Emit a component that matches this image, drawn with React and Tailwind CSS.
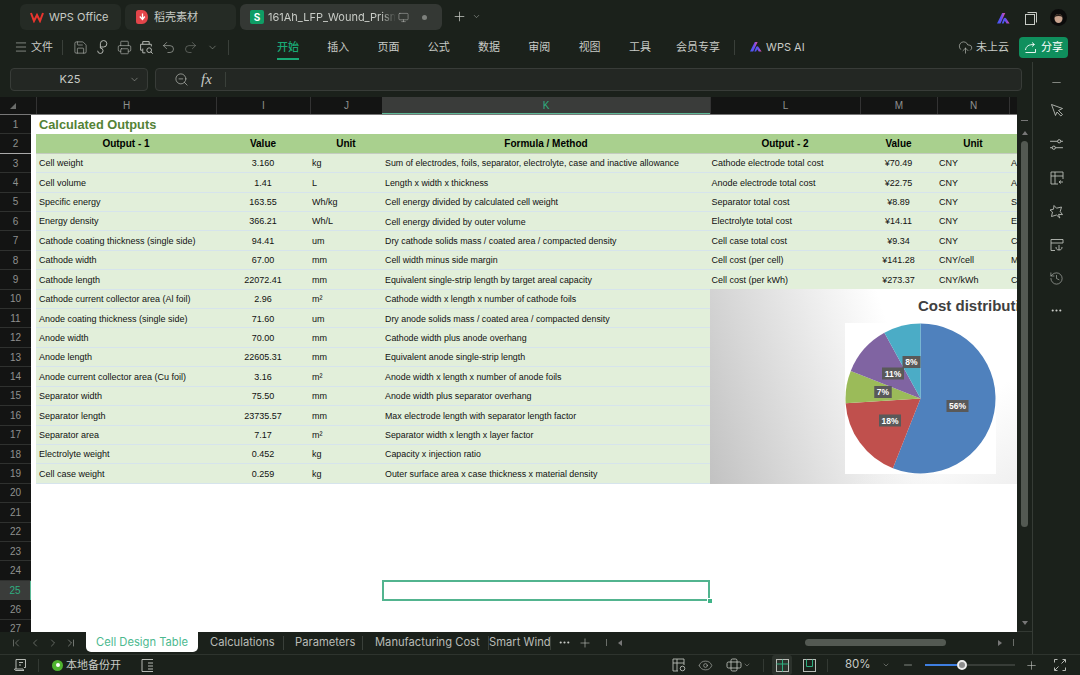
import {
  ChevronDown, ChevronFirst, ChevronLast, ChevronLeft, ChevronRight, CloudUpload, Ellipsis, Eye,
  History, Menu, Minus, Monitor, Plus, Printer, Redo2, Save, Undo2, ZoomOut,
} from "lucide-react"

const uiFont = "[font-family:'Inter','Noto_Sans_CJK_SC',sans-serif]"

const rows = [
  ["Cell weight", "3.160", "kg", "Sum of electrodes, foils, separator, electrolyte, case and inactive allowance", "Cathode electrode total cost", "¥70.49", "CNY", "A"],
  ["Cell volume", "1.41", "L", "Length x width x thickness", "Anode electrode total cost", "¥22.75", "CNY", "A"],
  ["Specific energy", "163.55", "Wh/kg", "Cell energy divided by calculated cell weight", "Separator total cost", "¥8.89", "CNY", "S"],
  ["Energy density", "366.21", "Wh/L", "Cell energy divided by outer volume", "Electrolyte total cost", "¥14.11", "CNY", "E"],
  ["Cathode coating thickness (single side)", "94.41", "um", "Dry cathode solids mass / coated area / compacted density", "Cell case total cost", "¥9.34", "CNY", "C"],
  ["Cathode width", "67.00", "mm", "Cell width minus side margin", "Cell cost (per cell)", "¥141.28", "CNY/cell", "M"],
  ["Cathode length", "22072.41", "mm", "Equivalent single-strip length by target areal capacity", "Cell cost (per kWh)", "¥273.37", "CNY/kWh", "C"],
  ["Cathode current collector area (Al foil)", "2.96", "m²", "Cathode width x length x number of cathode foils"],
  ["Anode coating thickness (single side)", "71.60", "um", "Dry anode solids mass / coated area / compacted density"],
  ["Anode width", "70.00", "mm", "Cathode width plus anode overhang"],
  ["Anode length", "22605.31", "mm", "Equivalent anode single-strip length"],
  ["Anode current collector area (Cu foil)", "3.16", "m²", "Anode width x length x number of anode foils"],
  ["Separator width", "75.50", "mm", "Anode width plus separator overhang"],
  ["Separator length", "23735.57", "mm", "Max electrode length with separator length factor"],
  ["Separator area", "7.17", "m²", "Separator width x length x layer factor"],
  ["Electrolyte weight", "0.452", "kg", "Capacity x injection ratio"],
  ["Cell case weight", "0.259", "kg", "Outer surface area x case thickness x material density"],
]

const columns = [
  ["H", "w-[180px]"], ["I", "w-[94px]"], ["J", "w-[72px]"], ["K", "w-[328px]"],
  ["L", "w-[150px]"], ["M", "w-[77px]"], ["N", "w-[72px]"],
]

const slices = [
  { pct: 56, color: "#4f81bd" },
  { pct: 18, color: "#c0504d" },
  { pct: 7, color: "#9bbb59" },
  { pct: 11, color: "#8064a2" },
  { pct: 8, color: "#4bacc6" },
]

const labels = [
  { text: "56%", x: 112.5, y: 83, w: 22 },
  { text: "18%", x: 45, y: 97.5, w: 22 },
  { text: "7%", x: 38, y: 69, w: 17.5 },
  { text: "11%", x: 48, y: 50.5, w: 22 },
  { text: "8%", x: 66.5, y: 39, w: 18 },
]

function slicePath(start, pct) {
  const a0 = (start / 100) * 2 * Math.PI
  const a1 = ((start + pct) / 100) * 2 * Math.PI
  const x0 = 75.5 + 75 * Math.sin(a0)
  const y0 = 75.5 - 75 * Math.cos(a0)
  const x1 = 75.5 + 75 * Math.sin(a1)
  const y1 = 75.5 - 75 * Math.cos(a1)
  return `M75.5 75.5L${x0} ${y0}A75 75 0 ${pct > 50 ? 1 : 0} 1 ${x1} ${y1}Z`
}

function PieChart() {
  let start = 0
  return (
    <svg width="151" height="151" viewBox="0 0 151 151" className="block bg-white">
      {slices.map((s) => {
        const d = slicePath(start, s.pct)
        start += s.pct
        return <path key={s.color} d={d} fill={s.color} />
      })}
      {labels.map((l) => (
        <g key={l.text}>
          <rect x={l.x - l.w / 2} y={l.y - 6} width={l.w} height="12" fill="#595959" />
          <text x={l.x} y={l.y + 3} textAnchor="middle" fontSize="8.5" fontWeight="700" fill="#fff" fontFamily="Liberation Sans">
            {l.text}
          </text>
        </g>
      ))}
    </svg>
  )
}

function AiLogo({ size = 12 }) {
  return (
    <svg width={size} height={size * 0.8} viewBox="0 0 15 12">
      <defs>
        <linearGradient id="ailogo" x1="0" x2="1" y1="0" y2="0">
          <stop offset="0" stopColor="#3d5cf5" />
          <stop offset="0.55" stopColor="#6a4cf0" />
          <stop offset="1" stopColor="#f0509a" />
        </linearGradient>
      </defs>
      <path d="M0 12L6 0h3.5L4 12z" fill="url(#ailogo)" />
      <path d="M7.5 6.5C8.5 5 10 5 10.8 6.5L14.5 12h-3.6L9 9 7.6 12H5.5z" fill="url(#ailogo)" />
    </svg>
  )
}

function Tabs() {
  return (
    <div className="h-[32px] flex items-start pt-[4px] pl-[20px] gap-[4px] text-[11px] text-[#c8cbc6]">
      <div className="w-[101px] h-[26px] rounded-[6px] bg-[#252b25] flex items-center pl-[10px] gap-[5px]">
        <svg width="14" height="11" viewBox="0 0 14 11" fill="none" stroke="#e8352e" strokeWidth="2">
          <path d="M1 1l3 8 3-6 3 6 3-8" />
        </svg>
        <span>WPS Office</span>
      </div>
      <div className="w-[111px] h-[26px] rounded-[6px] bg-[#252b25] flex items-center pl-[11px] gap-[6px]">
        <svg width="12" height="14" viewBox="0 0 12 14">
          <path d="M0 2.5A2.5 2.5 0 0 1 2.5 0H6c3.5 0 6 3 6 7s-2.5 7-6 7H2.5A2.5 2.5 0 0 1 0 11.5z" fill="#e2454a" />
          <path d="M6.5 3.5v5.5M3.8 6.5L6.5 9.5 8.8 6.5" fill="none" stroke="#fff" strokeWidth="1.3" />
        </svg>
        <span>稻壳素材</span>
      </div>
      <div className="w-[202px] h-[26px] rounded-[6px] bg-[#343834] flex items-center pl-[10px]">
        <div className="w-[14px] h-[14px] rounded-[2px] bg-[#0f9d65] text-white text-[10px] font-bold flex items-center justify-center">S</div>
        <div className="ml-[4px] w-[128px] overflow-hidden whitespace-nowrap [mask-image:linear-gradient(to_right,black_88%,transparent)]">161Ah_LFP_Wound_Prismatic</div>
        <Monitor size={11} strokeWidth={1} className="ml-[2px]" />
        <div className="ml-[13px] w-[5px] h-[5px] rounded-full bg-[#7d807c]" />
      </div>
      <Plus size={15} strokeWidth={1.2} className="ml-[6px] mt-[5px]" />
      <ChevronDown size={9} strokeWidth={1.2} className="ml-[1px] mt-[8px]" />
      <div className="ml-auto mr-[13px] mt-[7px] flex items-center">
        <AiLogo size={13} />
        <svg width="12" height="13" viewBox="0 0 12 13" fill="none" stroke="currentColor" strokeWidth="1" className="ml-[15px]">
          <rect x=".5" y="2.5" width="9" height="10" />
          <path d="M2.5 .5h9v10" />
        </svg>
        <svg width="17" height="17" viewBox="0 0 17 17" className="ml-[13px] -mt-[2px]">
          <circle cx="8.5" cy="8.5" r="8.5" fill="#0b0b0b" />
          <ellipse cx="8.5" cy="9.5" rx="4" ry="4.5" fill="#c9a48f" />
          <path d="M4.5 8C4.5 4 12.5 4 12.5 8 10 6.5 7 6.5 4.5 8z" fill="#2a211c" />
        </svg>
      </div>
    </div>
  )
}

function Toolbar() {
  const iconClass = "w-[22px] flex justify-center"
  const nav = ["插入", "页面", "公式", "数据", "审阅", "视图", "工具"]
  return (
    <div className="h-[30px] flex items-center pl-[14px] text-[11px] text-[#c8cbc6] whitespace-nowrap">
      <Menu size={14} strokeWidth={1} />
      <span className="ml-[3px] w-[22px]">文件</span>
      <div className="ml-[9px] w-px h-[15px] bg-[#3a403a]" />
      <div className="ml-[6px] flex items-center text-[#b9bcb7]">
        <span className={iconClass}><Save size={15} strokeWidth={1} /></span>
        <span className={iconClass}>
          <svg width="14" height="14" viewBox="0 0 13 13" fill="none" stroke="currentColor" strokeWidth="0.9">
            <path d="M5 7.5V3.5a3 3 0 1 1 3 3H5M5 7.5a2.5 2.5 0 1 1-2.5 2.5" />
          </svg>
        </span>
        <span className={iconClass}><Printer size={15} strokeWidth={1} /></span>
        <span className={iconClass}>
          <svg width="15" height="15" viewBox="0 0 14 14" fill="none" stroke="currentColor" strokeWidth="0.9">
            <path d="M3.5 4V1.5h6V4M3 9.5H1.5V4h10v2M3.5 8v4H6" />
            <circle cx="9.5" cy="9.5" r="2.2" />
            <path d="M11 11l1.8 1.8" />
          </svg>
        </span>
        <span className={iconClass}><Undo2 size={15} strokeWidth={1} /></span>
        <span className={iconClass}><Redo2 size={15} strokeWidth={1} className="text-[#7b7f7a]" /></span>
        <span className={iconClass}><ChevronDown size={11} strokeWidth={1} /></span>
      </div>
      <div className="ml-[5px] w-px h-[15px] bg-[#3a403a]" />
      <div className="ml-[34px] w-[50px] h-full flex items-center justify-center relative text-[#19a874] font-medium">
        开始
        <div className="absolute bottom-[2px] left-[14px] w-[22px] h-[2px] bg-[#19a874]" />
      </div>
      {nav.map((t) => (
        <div key={t} className="w-[50.3px] text-center">{t}</div>
      ))}
      <div className="w-[66px] text-center">会员专享</div>
      <div className="ml-[3px] w-px h-[15px] bg-[#3a403a]" />
      <div className="ml-[15px]"><AiLogo size={12} /></div>
      <span className="ml-[4px]">WPS AI</span>
      <div className="ml-auto flex items-center pr-[12px]">
        <CloudUpload size={15} strokeWidth={1} />
        <span className="ml-[3px]">未上云</span>
        <div className="ml-[10px] w-[49px] h-[21px] rounded-[4px] bg-[#0f8f5d] text-white flex items-center justify-center gap-[4px]">
          <svg width="13" height="13" viewBox="0 0 13 13" fill="none" stroke="currentColor" strokeWidth="0.9">
            <path d="M11.5 8v3.5h-10M1.5 9C2 5 5 3.5 10 3.5M8 1.5l2.5 2-2.5 2" />
          </svg>
          <span>分享</span>
        </div>
      </div>
    </div>
  )
}

function FormulaBar() {
  return (
    <div className="h-[35px] pt-[6px] pl-[10px] flex text-[#c8cbc6]">
      <div className="w-[138px] h-[23px] rounded-[4px] bg-[#232723] border border-[#383c38] flex items-center text-[11px]">
        <span className="w-[118px] text-center">K25</span>
        <ChevronDown size={11} strokeWidth={1} />
      </div>
      <div className="ml-[7px] w-[867px] h-[23px] rounded-[4px] bg-[#232723] border border-[#383c38] flex items-center">
        <ZoomOut size={15} strokeWidth={1} className="ml-[18px]" />
        <span className="ml-[12px] w-[14px] text-[15px] italic [font-family:'Liberation_Serif',serif]">fx</span>
        <div className="ml-[10px] w-px h-[15px] bg-[#3a403a]" />
      </div>
    </div>
  )
}

function ColumnHeaders() {
  return (
    <div className="h-[17px] flex bg-[#131413] text-[10px] text-[#8f918f] [font-family:'Liberation_Sans',sans-serif]">
      <div className="w-[36px] flex items-center justify-center">
        <div className="w-0 h-0 ml-[-10px] border-l-[6px] border-l-transparent border-b-[6px] border-b-[#6a6c6a]" />
      </div>
      {columns.map(([name, width]) => (
        name === "K" ? (
          <div key={name} className={`${width} bg-[#3a3c3a] text-[#2fae80] text-center leading-[17px] border-b-[1.5px] border-[#5cb896]`}>{name}</div>
        ) : (
          <div key={name} className={`${width} border-l border-[#333] text-center leading-[17px]`}>{name}</div>
        )
      ))}
      <div className="flex-1 border-l border-[#333]" />
    </div>
  )
}

function RowHeaders() {
  const nums = Array.from({ length: 27 }, (_, i) => i + 1)
  return (
    <div className="w-[31px] shrink-0 bg-[#131413] text-[10px] text-[#8f918f] [font-family:'Liberation_Sans',sans-serif]">
      {nums.map((n) => (
        n === 25 ? (
          <div key={n} className="h-[19.42px] bg-[#3a3c3a] text-[#2fae80] flex items-center justify-center border-r-[1.5px] border-[#5cb896]">{n}</div>
        ) : (
          <div key={n} className={`h-[19.42px] flex items-center justify-center border-b ${n === 2 ? "border-[#aaa]" : "border-[#2f312f]"}`}>{n}</div>
        )
      ))}
    </div>
  )
}

const rowGrid = "grid grid-cols-[180px_94px_72px_328px_150px_77px_72px_8px] h-[19.42px] items-center"

function SheetBody() {
  return (
    <div className="relative flex-1 overflow-hidden flex bg-white border-t border-[#777]">
      <RowHeaders />
      <div className="flex-1 pl-[5px] text-[9px] text-[#111] [font-family:'Liberation_Sans',sans-serif]">
        <div className="h-[19.42px] pl-[3px] flex items-center text-[12.8px] font-bold text-[#548235]">Calculated Outputs</div>
        <div className={`${rowGrid} bg-[#a9d08e] text-[10px] font-bold text-black text-center border-b border-[#c4ccc0]`}>
          <div>Output - 1</div><div>Value</div><div>Unit</div><div>Formula / Method</div>
          <div>Output - 2</div><div>Value</div><div>Unit</div><div />
        </div>
        {rows.map((r) => (
          <div key={r[0]} className={`${rowGrid} pt-[2px] bg-[#e2efda] border-b border-[#d6e4ec] whitespace-nowrap`}>
            <div className="pl-[3px]">{r[0]}</div>
            <div className="text-center">{r[1]}</div>
            <div className="pl-[2px]">{r[2]}</div>
            <div className="pl-[3px] text-[8.85px]">{r[3]}</div>
            <div className="pl-[1.5px]">{r[4]}</div>
            <div className="text-center">{r[5]}</div>
            <div className="pl-[2px]">{r[6]}</div>
            <div className="pl-[2px] overflow-hidden">{r[7]}</div>
          </div>
        ))}
      </div>

      {/* chart floats over cells L10:O19 */}
      <div className="absolute left-[710px] top-[174px] w-[307px] h-[195px] overflow-hidden bg-[linear-gradient(to_top_left,#f0f0f0,transparent_28%),linear-gradient(72deg,#c2c2c2_0%,#ffffff_62%)] [font-family:'Liberation_Sans',sans-serif]">
        <div className="absolute left-[208px] top-[6px] text-[15px] font-bold text-[#404040] whitespace-nowrap">Cost distribution</div>
        <div className="absolute left-[135px] top-[34px]"><PieChart /></div>
      </div>

      {/* selected cell K25 */}
      <div className="absolute left-[382px] top-[465px] w-[328px] h-[21px] border-2 border-[#52b48f]" />
      <div className="absolute left-[707px] top-[483px] w-[6px] h-[6px] bg-[#3fb488] border border-white" />
    </div>
  )
}

function ScrollGutter() {
  return (
    <div className="w-[15px] bg-[#1b211b] border-b border-[#333933] flex flex-col items-center">
      <div className="mt-[23px] w-[7px] h-px bg-[#777]" />
      <div className="mt-[10px] w-0 h-0 border-x-[3px] border-x-transparent border-b-[4px] border-b-[#777]" />
      <div className="mt-[6px] w-[7px] h-[386px] rounded-full bg-[#535952]" />
      <div className="mt-[94px] w-0 h-0 border-x-[3px] border-x-transparent border-t-[4px] border-t-[#777]" />
    </div>
  )
}

function SheetTabs() {
  return (
    <div className={`h-[22px] flex items-start pl-[10px] text-[11.2px] text-[#b9bcb7] ${uiFont}`}>
      <div className="h-[21px] flex items-center text-[#a9ada7]">
        <ChevronFirst size={12} strokeWidth={1} />
        <ChevronLeft size={12} strokeWidth={1} className="ml-[7px]" />
        <ChevronRight size={12} strokeWidth={1} className="ml-[6px]" />
        <ChevronLast size={12} strokeWidth={1} className="ml-[6px] text-[#c8cbc6]" />
      </div>
      <div className="ml-[9px] w-[112px] h-[20px] rounded-b-[5px] bg-white text-[#4cb98f] flex items-center justify-center">Cell Design Table</div>
      <div className="h-[21px] flex items-center whitespace-nowrap">
        <span className="ml-[12px] w-[62px]">Calculations</span>
        <div className="ml-[11px] w-px h-[14px] bg-[#3a403a]" />
        <span className="ml-[11px] w-[57px]">Parameters</span>
        <div className="ml-[10px] w-px h-[14px] bg-[#3a403a]" />
        <span className="ml-[12px] w-[102px]">Manufacturing Cost</span>
        <div className="ml-[11px] w-px h-[14px] bg-[#3a403a]" />
        <span className="w-[61px] overflow-hidden">Smart Windl</span>
        <div className="w-px h-[14px] bg-[#3a403a]" />
        <Ellipsis size={13} className="ml-[7px] text-[#c8cbc6]" />
        <Plus size={14} strokeWidth={1} className="ml-[7px] text-[#c8cbc6]" />
        <div className="ml-[14px] w-px h-[7px] bg-[#6a6e69]" />
        <div className="ml-[11px] w-0 h-0 border-y-[3px] border-y-transparent border-r-[4px] border-r-[#777]" />
        <div className="ml-[183px] w-[141px] h-[7px] rounded-full bg-[#535952]" />
        <div className="ml-[52px] w-0 h-0 border-y-[3px] border-y-transparent border-l-[4px] border-l-[#777]" />
        <div className="ml-[11px] w-px h-[7px] bg-[#6a6e69]" />
      </div>
    </div>
  )
}

function SideRail() {
  return (
    <div className="w-[48px] border-l border-[#363c36] flex flex-col items-center text-[#b9bcb7]">
      <Minus size={13} strokeWidth={1.2} className="mt-[14px]" />
      <svg width="14" height="14" viewBox="0 0 14 14" fill="none" stroke="currentColor" strokeWidth="0.9" className="mt-[14px]">
        <path d="M1.5 1.5L12.5 5.5 8.5 7.5 12.5 11.5 10.8 13 7 9 5.5 12.5z" />
      </svg>
      <svg width="15" height="15" viewBox="0 0 14 14" fill="none" stroke="currentColor" strokeWidth="0.9" className="mt-[20px]">
        <path d="M1 4h7M11 4h2M1 10h2M6 10h7" />
        <circle cx="9.5" cy="4" r="1.5" />
        <circle cx="4.5" cy="10" r="1.5" />
      </svg>
      <svg width="14" height="14" viewBox="0 0 14 14" fill="none" stroke="currentColor" strokeWidth="0.9" className="mt-[19px]">
        <path d="M8 13H1V1h12v7M1 5h12M5 1v12M9 11h4M11 9.5L9 11l2 1.5" />
      </svg>
      <svg width="15" height="15" viewBox="0 0 15 15" fill="none" stroke="currentColor" strokeWidth="0.9" className="mt-[19px]">
        <path d="M5 1.5l2.5 2.7 5-1.2-1.3 4.6 2.3 3-4-.2L10.8 14 7.5 11l-5 1.5 1-4.5L1 6l3.5-.8z" />
      </svg>
      <svg width="14" height="14" viewBox="0 0 14 14" fill="none" stroke="currentColor" strokeWidth="0.9" className="mt-[19px]">
        <path d="M13 5V1.5H1v11h4M1 5h12M9 7v5M9 12c-2 0-3-1-3-3M9 12c2 0 3-1 3-3" />
      </svg>
      <History size={15} strokeWidth={1} className="mt-[19px]" />
      <Ellipsis size={13} className="mt-[18px] text-[#c8cbc6]" />
    </div>
  )
}

function StatusBar() {
  const sep = "w-px h-[13px] bg-[#333933]"
  return (
    <div className={`h-[21px] border-t border-[#2e342e] flex items-center pl-[13px] pr-[14px] text-[11px] text-[#c8cbc6] ${uiFont}`}>
      <svg width="14" height="14" viewBox="0 0 14 14" fill="none" stroke="currentColor" strokeWidth="0.9">
        <path d="M3 1.5h9.5v8H11M3 1.5V11H1.5c0 1 .8 1.5 1.5 1.5h8c-.6-.4-1-1-1-1.5H3M6 4.5h4M6 7h2" />
      </svg>
      <div className={`ml-[11px] ${sep}`} />
      <div className="ml-[13px] w-[11px] h-[11px] rounded-full bg-[#4fb32f] flex items-center justify-center">
        <div className="w-[4px] h-[4px] rounded-full bg-white" />
      </div>
      <span className="ml-[3px]">本地备份开</span>
      <svg width="13" height="13" viewBox="0 0 13 13" fill="none" stroke="currentColor" strokeWidth="0.9" className="ml-[20px]">
        <path d="M12 .5H1v12h11M7 4h5M7 7h5M7 10h5" />
      </svg>
      <div className="ml-auto flex items-center">
        <svg width="16" height="14" viewBox="0 0 16 14" fill="none" stroke="currentColor" strokeWidth="0.9" className="text-[#b9bcb7]">
          <path d="M7 13H2V1h11v6M2 5h11M6 1v12" />
          <circle cx="11.5" cy="10.5" r="2.3" />
        </svg>
        <Eye size={15} strokeWidth={1} className="ml-[11px] text-[#b9bcb7]" />
        <svg width="16" height="14" viewBox="0 0 16 14" fill="none" stroke="currentColor" strokeWidth="0.9" className="ml-[13px] text-[#b9bcb7]">
          <rect x="5" y="1" width="6" height="12" rx="1.5" />
          <rect x="1" y="4" width="14" height="6" rx="1.5" />
        </svg>
        <ChevronDown size={8} strokeWidth={1.2} className="ml-[1px]" />
        <div className={`ml-[12px] ${sep}`} />
        <div className="ml-[8px] w-[20px] h-[20px] rounded-[3px] bg-[#2c322c] flex items-center justify-center">
          <svg width="13" height="13" viewBox="0 0 13 13" fill="none" strokeWidth="1">
            <rect x=".5" y=".5" width="12" height="12" stroke="#b9bcb7" />
            <path d="M.5 5h12M6.5 .5v12" stroke="#2fae80" />
          </svg>
        </div>
        <svg width="16" height="13" viewBox="0 0 16 13" fill="none" strokeWidth="1" className="ml-[9px]">
          <rect x="2.5" y=".5" width="12" height="12" stroke="#b9bcb7" />
          <path d="M5.5 .5v7h6v-7" stroke="#2fae80" />
        </svg>
        <div className={`ml-[10px] ${sep}`} />
        <span className="ml-[17px] w-[24px] text-[11.5px]">80%</span>
        <ChevronDown size={8} strokeWidth={1.2} className="ml-[13px]" />
        <Minus size={12} strokeWidth={1.2} className="ml-[12px]" />
        <div className="ml-[11px] w-[90px] h-[11px] flex items-center">
          <div className="w-[32px] h-[2px] bg-[#3f7fe0]" />
          <div className="w-[10px] h-[10px] rounded-full bg-[#8d8d8d] border-[2.5px] border-[#eeeeee]" />
          <div className="flex-1 h-[2px] bg-[#383d38]" />
        </div>
        <Plus size={13} strokeWidth={1.1} className="ml-[10px]" />
        <svg width="12" height="12" viewBox="0 0 12 12" fill="none" stroke="currentColor" strokeWidth="0.9" className="ml-[16px]">
          <path d="M.5 3.5v-3h3M8.5 .5h3v3M11.5 8.5v3h-3M3.5 11.5h-3v-3M7.5 4.5l3.5-3.5M4.5 7.5L1 11" />
        </svg>
      </div>
    </div>
  )
}

export default function App() {
  return (
    <div className={`w-[1080px] h-[675px] overflow-hidden flex flex-col bg-[#1b211b] ${uiFont}`}>
      <Tabs />
      <Toolbar />
      <div className="h-[592px] flex">
        <div className="w-[1032px] flex flex-col">
          <FormulaBar />
          <div className="h-[535px] flex">
            <div className="w-[1017px] flex flex-col">
              <ColumnHeaders />
              <SheetBody />
            </div>
            <ScrollGutter />
          </div>
          <SheetTabs />
        </div>
        <SideRail />
      </div>
      <StatusBar />
    </div>
  )
}
